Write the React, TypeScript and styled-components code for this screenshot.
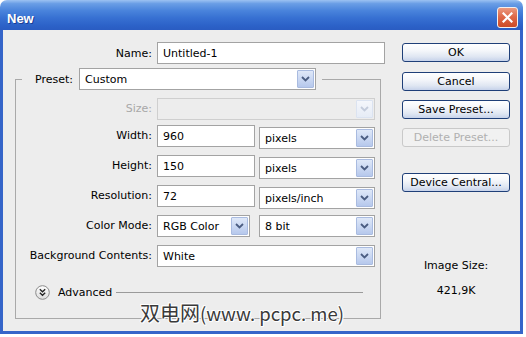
import React from "react";
import styled, { createGlobalStyle } from "styled-components";

const Global = createGlobalStyle`
  html, body { margin: 0; padding: 0; background: #ffffff; }
  body { font-family: "DejaVu Sans", Verdana, sans-serif; font-size: 11px; color: #000; }
  * { box-sizing: border-box; }
`;

const Window = styled.div`
  position: relative;
  width: 523px;
  height: 334px;
  display: flex;
  flex-direction: column;
`;

const TitleBar = styled.div`
  height: 30px;
  flex: none;
  border-radius: 7px 7px 0 0;
  background: linear-gradient(180deg, #9cc2f2 0%, #6a9ee6 12%, #4a84dc 35%, #3770d2 60%, #2c62c8 85%, #2a5cc2 100%);
  display: flex;
  align-items: center;
  justify-content: space-between;
  padding: 4px 5px 0 7px;
`;

const Title = styled.span`
  font-family: "Liberation Sans", Arial, sans-serif;
  font-weight: bold;
  font-size: 13px;
  color: #ffffff;
  margin-top: 3px;
  text-shadow: 1px 1px 0 #1b3f96;
`;

const CloseButton = styled.div`
  width: 21px;
  height: 21px;
  border: 1px solid #f4f0ee;
  border-radius: 3px;
  background: linear-gradient(180deg, #eb9a80 0%, #df6a4a 45%, #cc4a26 100%);
  display: flex;
  align-items: center;
  justify-content: center;
`;

const Frame = styled.div`
  flex: 1;
  display: flex;
  background: #ededed;
  border: 3px solid #3565c9;
  border-top: 0;
`;

const LeftCol = styled.div`
  width: 386px;
  display: flex;
  flex-direction: column;
`;

const NameRow = styled.div`
  margin-top: 12px;
  display: flex;
  align-items: center;
  gap: 5px;
`;

const Label = styled.span<{ $w?: number; $disabled?: boolean }>`
  width: ${(p) => (p.$w ? `${p.$w}px` : "auto")};
  text-align: right;
  white-space: nowrap;
  color: ${(p) => (p.$disabled ? "#a5a5a5" : "#000")};
`;

const TextInput = styled.div<{ $w: number }>`
  width: ${(p) => p.$w}px;
  height: 22px;
  background: #fff;
  border: 1px solid #a3a3a3;
  padding: 0 5px;
  display: flex;
  align-items: center;
  white-space: nowrap;
`;

const Group = styled.fieldset`
  margin: 4px 0 0 12px;
  width: 366px;
  padding: 0;
  border: 1px solid #a9a9a9;
  min-width: 0;
`;

const Legend = styled.legend`
  margin-left: 6px;
  padding: 0 6px 0 13px;
  display: flex;
  align-items: center;
  gap: 6px;
`;

const SelectBox = styled.div<{ $w: number; $disabled?: boolean; $mt?: number }>`
  width: ${(p) => p.$w}px;
  height: 22px;
  margin-top: ${(p) => p.$mt || 0}px;
  background: ${(p) => (p.$disabled ? "#ededed" : "#fff")};
  border: 1px solid ${(p) => (p.$disabled ? "#cfcfcf" : "#a3a3a3")};
  display: flex;
  align-items: stretch;
`;

const SelectText = styled.span`
  flex: 1;
  display: flex;
  align-items: center;
  padding-left: 5px;
  white-space: nowrap;
`;

const ArrowBtn = styled.span<{ $disabled?: boolean }>`
  width: 17px;
  margin: 1px;
  border: 1px solid ${(p) => (p.$disabled ? "#dbe3f1" : "#a9bbe0")};
  border-radius: 1px;
  background: ${(p) =>
    p.$disabled
      ? "linear-gradient(180deg, #f4f6fb, #e6ecf6)"
      : "linear-gradient(180deg, #dfe8f8 0%, #c9d7f2 55%, #b6c8ec 100%)"};
  display: flex;
  align-items: center;
  justify-content: center;
`;

const Rows = styled.div`
  display: flex;
  flex-direction: column;
`;

const FieldRow = styled.div<{ $mt: number }>`
  margin-top: ${(p) => p.$mt}px;
  display: grid;
  grid-template-columns: 141px 102px 116px;
  align-items: start;
  height: 22px;
`;

const RowLabel = styled.span<{ $disabled?: boolean }>`
  padding-right: 5px;
  text-align: right;
  line-height: 22px;
  white-space: nowrap;
  color: ${(p) => (p.$disabled ? "#a8a8a8" : "#000")};
`;

const Span2 = styled.div`
  grid-column: 2 / span 2;
`;

const AdvancedRow = styled.div`
  margin: 18px 0 18px 0;
  padding-left: 19px;
  display: flex;
  align-items: center;
  height: 15px;
`;

const AdvText = styled.span`
  margin-left: 8px;
`;

const Rule = styled.div`
  flex: 1;
  height: 1px;
  background: #9a9a9a;
  margin: 0 17px 0 4px;
`;

const RightCol = styled.div`
  width: 108px;
  margin-left: 13px;
  padding-top: 13px;
  display: flex;
  flex-direction: column;
  align-items: stretch;
`;

const Button = styled.div<{ $mt: number; $disabled?: boolean }>`
  margin-top: ${(p) => p.$mt}px;
  height: 19px;
  border: 1px solid ${(p) => (p.$disabled ? "#c9c9c9" : "#1f3f78")};
  border-radius: 3px;
  background: ${(p) =>
    p.$disabled
      ? "#f1f1f1"
      : "linear-gradient(180deg, #ffffff 0%, #f4f6fa 40%, #dfe6f2 75%, #c6d2ea 100%)"};
  color: ${(p) => (p.$disabled ? "#b0b0b0" : "#000")};
  display: flex;
  align-items: center;
  justify-content: center;
  white-space: nowrap;
`;

const Info = styled.div<{ $mt: number }>`
  margin-top: ${(p) => p.$mt}px;
  line-height: 14px;
  text-align: center;
`;

const Watermark = styled.div`
  position: absolute;
  left: 140px;
  top: 301px;
  display: flex;
  align-items: center;
  color: #3a3a3a;
  font-family: "Noto Sans CJK SC", sans-serif;
  text-shadow: 1px 0 0 #fff, -1px 0 0 #fff, 0 1px 0 #fff, 0 -1px 0 #fff, 1px 1px 0 #fff, -1px -1px 0 #fff;
  white-space: nowrap;
`;

const WmPart = styled.span<{ $size: number }>`
  font-size: ${(p) => p.$size}px;
  line-height: 24px;
`;

const Chevron = ({ disabled }: { disabled?: boolean }) => (
  <svg width="9" height="6" viewBox="0 0 9 6">
    <path d="M1 1 L4.5 4.5 L8 1" fill="none" stroke={disabled ? "#c3cbdb" : "#4b5d82"} strokeWidth="1.8" />
  </svg>
);

const Select = ({ w, value, disabled, mt }: { w: number; value?: string; disabled?: boolean; mt?: number }) => (
  <SelectBox $w={w} $disabled={disabled} $mt={mt}>
    <SelectText>{value}</SelectText>
    <ArrowBtn $disabled={disabled}>
      <Chevron disabled={disabled} />
    </ArrowBtn>
  </SelectBox>
);

const AdvIcon = () => (
  <svg width="15" height="15" viewBox="0 0 15 15">
    <defs>
      <linearGradient id="advg" x1="0" y1="0" x2="0" y2="1">
        <stop offset="0" stopColor="#ffffff" />
        <stop offset="1" stopColor="#dcdcdc" />
      </linearGradient>
    </defs>
    <circle cx="7.5" cy="7.5" r="6.8" fill="url(#advg)" stroke="#8a8a8a" strokeWidth="1" />
    <path d="M4.8 4.3 L7.5 6.8 L10.2 4.3 M4.8 7.8 L7.5 10.3 L10.2 7.8" fill="none" stroke="#222" strokeWidth="1.3" />
  </svg>
);

export default function App() {
  return (
    <>
      <Global />
      <Window>
        <TitleBar>
          <Title>New</Title>
          <CloseButton>
            <svg width="11" height="11" viewBox="0 0 11 11">
              <path d="M1.5 1.5 L9.5 9.5 M9.5 1.5 L1.5 9.5" stroke="#fff" strokeWidth="2.2" strokeLinecap="square" />
            </svg>
          </CloseButton>
        </TitleBar>
        <Frame>
          <LeftCol>
            <NameRow>
              <Label $w={149}>Name:</Label>
              <TextInput $w={228}>Untitled-1</TextInput>
            </NameRow>
            <Group>
              <Legend>
                <Label>Preset:</Label>
                <Select w={237} value="Custom" />
              </Legend>
              <Rows>
                <FieldRow $mt={8}>
                  <RowLabel $disabled>Size:</RowLabel>
                  <Span2>
                    <Select w={218} disabled />
                  </Span2>
                </FieldRow>
                <FieldRow $mt={5}>
                  <RowLabel>Width:</RowLabel>
                  <TextInput $w={98}>960</TextInput>
                  <Select w={116} value="pixels" mt={2} />
                </FieldRow>
                <FieldRow $mt={8}>
                  <RowLabel>Height:</RowLabel>
                  <TextInput $w={98}>150</TextInput>
                  <Select w={116} value="pixels" mt={2} />
                </FieldRow>
                <FieldRow $mt={8}>
                  <RowLabel>Resolution:</RowLabel>
                  <TextInput $w={98}>72</TextInput>
                  <Select w={116} value="pixels/inch" mt={2} />
                </FieldRow>
                <FieldRow $mt={8}>
                  <RowLabel>Color Mode:</RowLabel>
                  <Select w={93} value="RGB Color" />
                  <Select w={116} value="8 bit" />
                </FieldRow>
                <FieldRow $mt={8}>
                  <RowLabel>Background Contents:</RowLabel>
                  <Span2>
                    <Select w={218} value="White" />
                  </Span2>
                </FieldRow>
              </Rows>
              <AdvancedRow>
                <AdvIcon />
                <AdvText>Advanced</AdvText>
                <Rule />
              </AdvancedRow>
            </Group>
          </LeftCol>
          <RightCol>
            <Button $mt={0}>OK</Button>
            <Button $mt={10}>Cancel</Button>
            <Button $mt={9}>Save Preset...</Button>
            <Button $mt={9} $disabled>Delete Preset...</Button>
            <Button $mt={26}>Device Central...</Button>
            <Info $mt={67}>Image Size:</Info>
            <Info $mt={11}>421,9K</Info>
          </RightCol>
        </Frame>
        <Watermark>
          <WmPart $size={20}>双电网</WmPart>
          <WmPart $size={18.5}>(www. pcpc. me)</WmPart>
        </Watermark>
      </Window>
    </>
  );
}
